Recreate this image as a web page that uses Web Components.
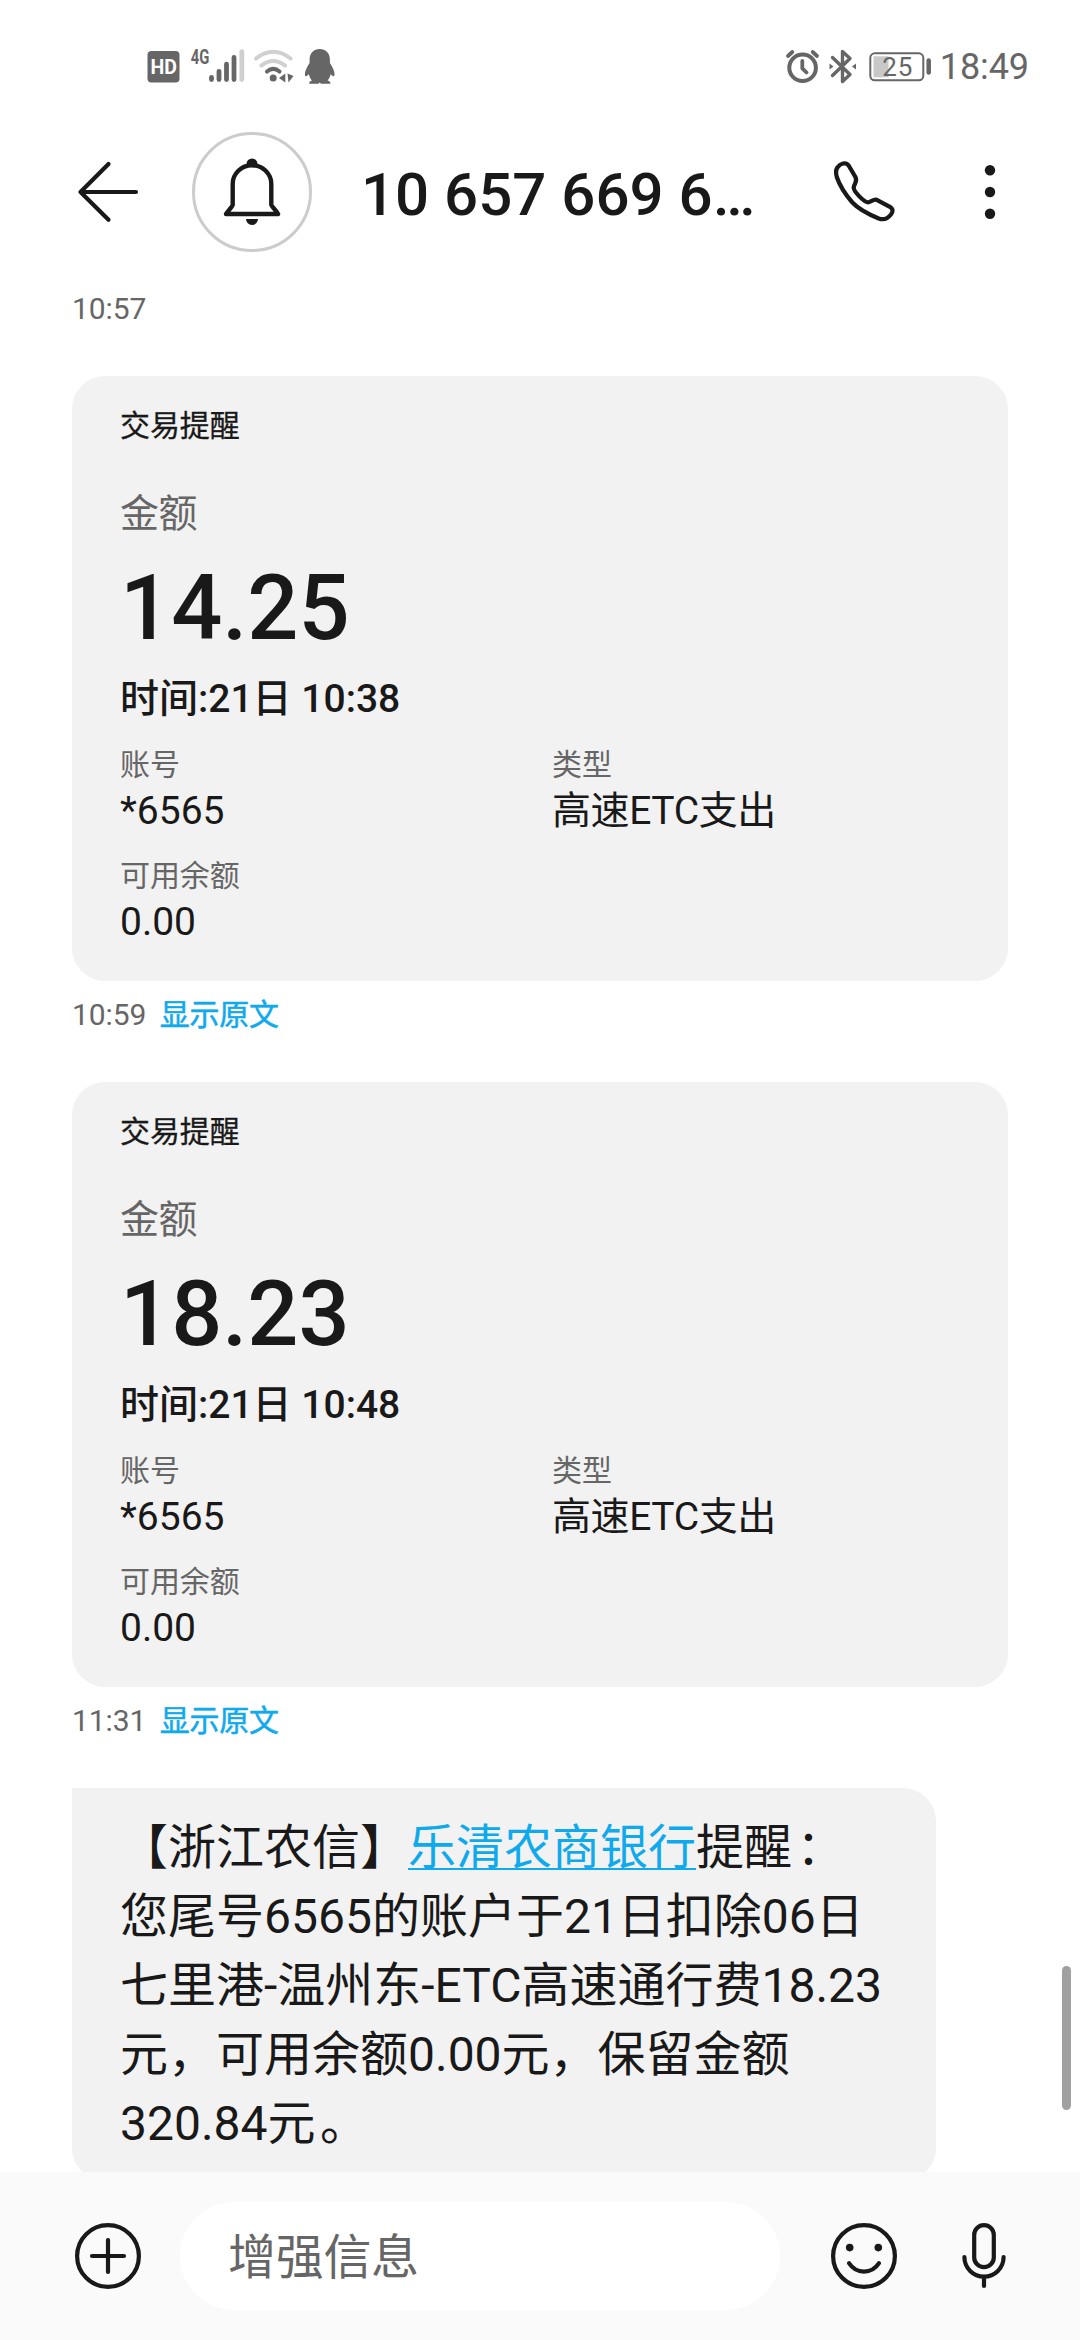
<!DOCTYPE html>
<html lang="zh-CN">
<head>
<meta charset="utf-8">
<title>信息</title>
<style>
html,body{margin:0;padding:0;background:#fff}
body{width:1080px;height:2340px;overflow:hidden;font-family:Roboto,"Noto Sans CJK SC",sans-serif;color:#191919;text-spacing-trim:space-all;text-autospace:no-autospace}
</style>
</head>
<body>
<sms-screen></sms-screen>
<script>
const define = (name, html) => {
  const t = document.createElement('template');
  t.innerHTML = html;
  customElements.define(name, class extends HTMLElement {
    constructor() {
      super();
      this.attachShadow({ mode: 'open' }).appendChild(t.content.cloneNode(true));
    }
    connectedCallback() {
      this.shadowRoot.querySelectorAll('[data-attr]').forEach(n => {
        n.textContent = this.getAttribute(n.dataset.attr) || '';
      });
    }
  });
};

define('status-bar', `
<style>
:host{display:flex;justify-content:space-between;height:107px;box-sizing:border-box;padding:40px 51px 0 140px;color:#666}
.side{display:flex;height:54px}
svg{display:block;flex:none}
time{font-size:36px;line-height:54px;letter-spacing:-.1px}
</style>
<div class="side">
<svg width="204" height="54" viewBox="140 40 204 54" fill="#666">
<rect x="147.500" y="51" width="32" height="31.500" rx="4"/>
<text x="150.500" y="74.300" font-size="21" font-weight="700" fill="#fff" textLength="26.500" lengthAdjust="spacingAndGlyphs">HD</text>
<text x="190.700" y="64" font-size="21" font-weight="700" textLength="18.600" lengthAdjust="spacingAndGlyphs">4G</text>
<g stroke="#666" stroke-width="4.800" stroke-linecap="round"><path d="M211.500 77.500V79.600M219 71.300V79.600M226.500 64.200V79.600M234 57.400V79.600"/><path stroke="#d0d0d0" d="M241.800 51.600V79.600"/></g>
<g fill="none" stroke-width="4" stroke-linecap="round"><path stroke="#d0d0d0" d="M256 58.500Q273.200 45 290.500 58.500M261.500 65.500Q273.200 56.500 285 65.500"/><path stroke="#666" d="M267 71.600Q273.200 66 279.500 71.600"/></g>
<circle cx="273.200" cy="78" r="3.500"/><path d="M285.300 73.500V82.500L279 78ZM287.500 73.500L293.500 76L288.500 82.500Z"/>
<path d="M319.700 49C313.500 49 309.600 53.500 309.600 59.500V63C307 67 304.500 71.500 305 75C305.300 77.500 307.500 76 308.800 74C309.500 77 310.500 79 312 80.500C310 81.200 308.800 82.300 309.200 83.800H318.500L319.700 82.600L321 83.800H330.500C330.900 82.300 329.500 81.200 327.500 80.500C329 79 330 77 330.800 74C332 76 334 77.500 334.500 75C335 71.500 332.500 67 329.900 63V59.500C329.900 53.500 326 49 319.700 49Z"/>
</svg>
</div>
<div class="side">
<svg width="159" height="54" viewBox="780 40 159 54" fill="none" stroke="#666">
<circle cx="801.600" cy="67.800" r="13.300" stroke-width="4"/>
<path stroke-width="3.800" stroke-linecap="round" stroke-linejoin="round" d="M801.300 61V68.300L805.500 72.500M787 56L791.300 52M816 56L811.700 52"/>
<path stroke-width="3.400" stroke-linecap="round" stroke-linejoin="round" d="M831.500 57.500L849 74.500L841.500 81.500V51.500L849 58.500L831.500 75.500"/>
<path fill="#666" stroke="none" d="M828.500 63.500L832.500 66.500L828.500 69.500ZM855 63.500L851 66.500L855 69.500Z"/>
<rect x="869.300" y="53.300" width="53" height="27" rx="4.500" stroke-width="2"/>
<rect x="872.500" y="56.300" width="15" height="21" fill="#c8c8c8" stroke="none"/>
<path stroke-width="4.500" stroke-linecap="round" d="M927.700 60.500V72.500"/>
<text x="881.300" y="76" font-size="26" fill="#666" stroke="none" textLength="30" lengthAdjust="spacing">25</text>
</svg>
<time>18:49</time>
</div>`);

define('chat-header', `
<style>
:host{display:flex;align-items:center;height:170px;box-sizing:border-box;padding-left:72px}
svg{display:block;flex:none}
h1{margin:0 0 0 49px;padding-top:5px;width:399px;font-size:60px;line-height:72px;font-weight:500;white-space:nowrap}
.bell{margin-left:48px}
.call{margin-left:72px}
.more{margin-left:80px}
</style>
<svg width="72" height="72" viewBox="72 156 72 72" fill="none" stroke="#191919" stroke-width="4.200" stroke-linecap="round" stroke-linejoin="round"><path d="M136 192H80.500M108.500 164L80.500 192L108.500 219.700"/></svg>
<svg class="bell" width="120" height="120" viewBox="192 132 120 120" fill="none"><circle cx="252" cy="192" r="58.500" stroke="#ccc" stroke-width="3"/>
<path stroke="#191919" stroke-width="4.400" stroke-linejoin="round" d="M226 214C229.500 209 232.700 206 232.700 205V184A19.300 18.700 0 0 1 271.300 184V205C271.300 206 275 209 278 214Z"/>
<path fill="#191919" d="M246.500 166V164A5.500 5.500 0 0 1 257.500 164V166ZM246 219H258A6 6 0 0 1 246 219Z"/></svg>
<h1><slot></slot></h1>
<svg class="call" width="72" height="72" viewBox="828 156 72 72" fill="none" stroke="#191919" stroke-width="4.200" stroke-linejoin="round"><path transform="translate(-12.500 0) scale(1.014 1)" d="M834.200 167.500C837 163.500 842.500 161.500 845.300 165.500L852 177C854.500 182 850.500 183.500 850.300 187.500C850 191 860 202 864.500 202.300C868 202.300 869.500 198.500 873 199.800L886 206.800C889.500 209 889 212 887 214.500C883.500 219 879 220 875 218.500C863 213.500 855 209 849 202.500C842.500 195 837 187 833.600 177C832.500 173 832.700 169.800 834.200 167.500Z"/></svg>
<svg class="more" width="12" height="72" viewBox="978 156 12 72" fill="#191919"><circle cx="984" cy="170.300" r="5.200"/><circle cx="984" cy="192" r="5.200"/><circle cx="984" cy="213.800" r="5.200"/></svg>`);

define('message-meta', `
<style>
:host{display:flex;gap:13.500px;height:40px;font-size:30px;line-height:40px;color:#666;margin-bottom:47px}
time{letter-spacing:-.1px}
.act{color:#0fa9ee;-webkit-text-stroke:.5px #0fa9ee;letter-spacing:-.2px}
</style>
<time data-attr="time"></time><span class="act"><slot></slot></span>`);

define('detail-field', `
<style>
:host{display:block}
:host([tight]) .v{letter-spacing:-.4px}
.k{font-size:30px;line-height:40px;color:#666;letter-spacing:-.1px}
.v{font-size:39px;line-height:52px;white-space:nowrap}
</style>
<div class="k" data-attr="label"></div><div class="v"><slot></slot></div>`);

define('transaction-card', `
<style>
:host{display:block;width:936px;height:605px;box-sizing:border-box;padding:30px 48px 33px;border-radius:33px;background:#f2f2f2;margin-bottom:14px}
.t{font-size:30px;line-height:40px;-webkit-text-stroke:.3px;letter-spacing:-.1px}
.l{margin-top:42px;font-size:39px;line-height:52px;color:#666;letter-spacing:-.5px}
.a{margin-top:16px;font-size:90px;line-height:106px;font-weight:500}
.w{margin-top:11px;font-size:39px;line-height:52px;font-weight:500}
.g{margin-top:20px;display:grid;grid-template-columns:432px 1fr;row-gap:19px}
</style>
<div class="t">交易提醒</div><div class="l">金额</div>
<div class="a" data-attr="amount"></div><div class="w" data-attr="when"></div>
<div class="g"><slot></slot></div>`);

define('text-bubble', `
<style>
:host{display:block;width:864px;height:393px;box-sizing:border-box;padding:25px 48px 23px;border-radius:0 33px 33px 33px;background:#f2f2f2;font-size:48px;line-height:69px;white-space:nowrap}
</style><slot></slot>`);

define('compose-bar', `
<style>
:host{display:flex;align-items:center;height:168px;box-sizing:border-box;padding-left:72px;background:#fafafa}
svg{display:block;flex:none}
.field{width:600px;height:108px;box-sizing:border-box;padding:2px 0 0 48px;margin:0 48px 0 36px;border-radius:54px;background:#fff;font-size:48px;line-height:108px;color:#666;letter-spacing:-.3px}
.mic{margin-left:48px}
</style>
<svg width="72" height="72" viewBox="72 2220 72 72" fill="none" stroke="#191919" stroke-width="4.200" stroke-linecap="round"><circle cx="108" cy="2256" r="30.900"/><path d="M92 2256H124M108 2240V2272"/></svg>
<div class="field"><slot></slot></div>
<svg width="72" height="72" viewBox="828 2220 72 72" fill="none" stroke="#191919" stroke-width="4.200" stroke-linecap="round"><circle cx="864" cy="2256" r="30.900"/><path d="M849 2263.200C856.500 2274.500 871.500 2274.500 879 2263.200"/><g fill="#191919" stroke="none"><circle cx="849.700" cy="2247.600" r="3.800"/><circle cx="878.300" cy="2247.600" r="3.800"/></g></svg>
<svg class="mic" width="72" height="72" viewBox="948 2220 72 72" fill="none" stroke="#191919" stroke-width="4.200" stroke-linecap="round"><rect x="974.200" y="2225.200" width="19.600" height="42" rx="9.800"/><path d="M964.400 2257A19.600 19.700 0 0 0 1003.600 2257M984 2277V2286"/></svg>`);

define('sms-screen', `
<style>
:host{display:flex;flex-direction:column;position:relative;width:1080px;height:2340px;overflow:hidden;background:#fff}
main{flex:1;min-height:0;overflow:hidden;padding:12px 72px 0;box-sizing:border-box}
a{color:#0fa9ee;text-decoration:underline;text-decoration-thickness:2px;text-underline-offset:4px;text-decoration-skip-ink:none}
.ln{display:block}
.p{margin-left:4.500px}
.bar{position:absolute;left:1062px;top:1966px;width:9px;height:144px;border-radius:5px;background:#a0a0a0}
</style>
<status-bar></status-bar>
<chat-header>10 657 669 6…</chat-header>
<main>
<message-meta time="10:57"></message-meta>
<transaction-card amount="14.25" when="时间:21日 10:38"><detail-field label="账号">*6565</detail-field><detail-field tight label="类型">高速ETC支出</detail-field><detail-field label="可用余额">0.00</detail-field></transaction-card>
<message-meta time="10:59">显示原文</message-meta>
<transaction-card amount="18.23" when="时间:21日 10:48"><detail-field label="账号">*6565</detail-field><detail-field tight label="类型">高速ETC支出</detail-field><detail-field label="可用余额">0.00</detail-field></transaction-card>
<message-meta time="11:31">显示原文</message-meta>
<text-bubble><span class="ln">【浙江农信】<a>乐清农商银行</a>提醒<span class="p">：</span></span><span class="ln">您尾号6565的账户于21日扣除06日</span><span class="ln">七里港-温州东-ETC高速通行费18.23</span><span class="ln">元，可用余额0.00元，保留金额</span><span class="ln">320.84元<span class="p">。</span></span></text-bubble>
</main>
<compose-bar>增强信息</compose-bar>
<div class="bar"></div>`);
</script>
</body>
</html>
